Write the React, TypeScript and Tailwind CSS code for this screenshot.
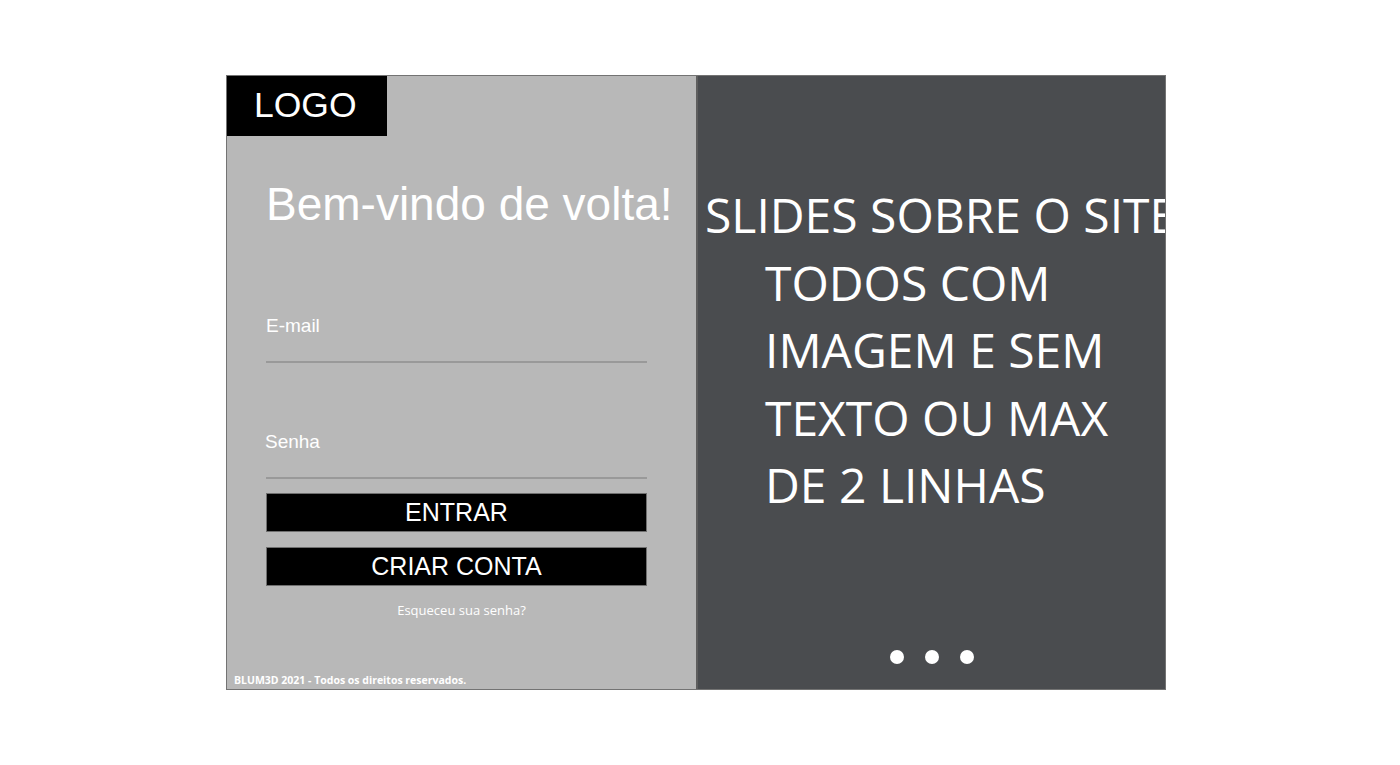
const DOTS = [0, 1, 2]

function LoginPanel() {
  return (
    <section className="relative flex flex-col w-[469px] h-full bg-[#b8b8b8] font-['Liberation_Sans',Arial,sans-serif] text-white">
      {/* Logo */}
      <div className="flex items-center w-[160px] h-[60px] bg-black pl-[27px] text-[35.5px] leading-none">
        LOGO
      </div>

      <div className="flex flex-col pl-[39px] pr-[49px]">
        <h1 className="mt-[42px] text-[46px] leading-[52px] font-normal whitespace-nowrap">
          Bem-vindo de volta!
        </h1>

        {/* Fields */}
        <label className="mt-[85px] flex flex-col">
          <span className="text-[19px] leading-[22px]">E-mail</span>
          <span className="h-[24px]" />
          <span className="border-b-2 border-[#999999]" />
        </label>
        <label className="mt-[68px] flex flex-col">
          <span className="text-[19px] leading-[22px] -ml-px">Senha</span>
          <span className="h-[24px]" />
          <span className="border-b-2 border-[#999999]" />
        </label>

        <button className="mt-[14px] h-[39px] bg-black border border-[#6f6f6f] text-[25px] leading-none">
          ENTRAR
        </button>
        <button className="mt-[15px] h-[39px] bg-black border border-[#6f6f6f] text-[25px] leading-none">
          CRIAR CONTA
        </button>
      </div>

      <p className="mt-[15px] text-center text-[13px] leading-[18px] font-['Open_Sans',sans-serif]">
        Esqueceu sua senha?
      </p>

      <p className="mt-auto mb-[2px] pl-[7px] text-[10.5px] leading-[14px] font-bold font-['Open_Sans',sans-serif]">
        BLUM3D 2021 - Todos os direitos reservados.
      </p>
    </section>
  )
}

function SlidesPanel() {
  return (
    <section className="flex flex-col flex-1 h-full bg-[#4a4c4f] border-l-2 border-[#5e5e5e] overflow-hidden text-white">
      <p className="mt-[105px] pl-[67px] -indent-[60px] text-[48px] leading-[67.5px] whitespace-pre-line font-['Open_Sans',sans-serif]">
        <span className="whitespace-nowrap">SLIDES SOBRE O SITE</span>
        {'\n'}TODOS COM{'\n'}IMAGEM E SEM{'\n'}TEXTO OU MAX{'\n'}DE 2 LINHAS
      </p>

      <div className="mt-auto mb-[25px] flex justify-center gap-[21px]">
        {DOTS.map((d) => (
          <span key={d} className="w-[14px] h-[14px] rounded-full bg-white" />
        ))}
      </div>
    </section>
  )
}

export default function App() {
  return (
    <div className="w-[1400px] h-[765px] bg-white pt-[75px] pl-[226px]">
      <div className="flex w-[940px] h-[615px] border border-[#737373]">
        <LoginPanel />
        <SlidesPanel />
      </div>
    </div>
  )
}
